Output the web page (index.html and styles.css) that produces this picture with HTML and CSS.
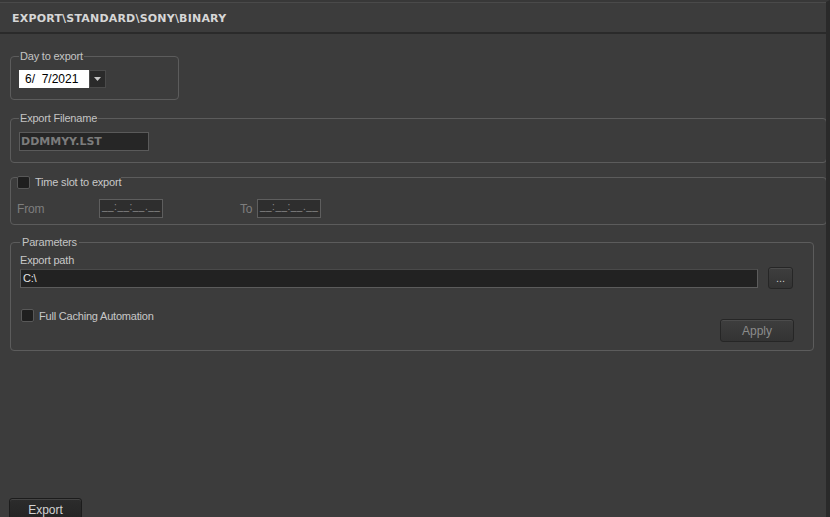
FILE: index.html
```html
<!DOCTYPE html>
<html>
<head>
<meta charset="utf-8">
<link rel="stylesheet" href="styles.css">
</head>
<body>
<div class="window">
  <div class="header"><span class="title">EXPORT\STANDARD\SONY\BINARY</span></div>
  <div class="body">
    <fieldset class="group g-day">
      <legend class="legend">Day to export</legend>
      <div class="combo">
        <span class="combo-value">6/&nbsp; 7/2021</span>
        <span class="combo-btn"><svg width="7" height="4" viewBox="0 0 7 4"><path d="M0 0H7L3.5 4Z" fill="#c8c8c8"/></svg></span>
      </div>
    </fieldset>

    <fieldset class="group g-file">
      <legend class="legend">Export Filename</legend>
      <div class="filename">DDMMYY.LST</div>
    </fieldset>

    <fieldset class="group g-time">
      <legend class="legend check-legend"><span class="checkbox"></span><span class="check-text">Time slot to export</span></legend>
      <div class="time-row">
        <span class="dim-label from">From</span>
        <span class="time-box">__:__:__.__</span>
        <span class="dim-label to">To</span>
        <span class="time-box">__:__:__.__</span>
      </div>
    </fieldset>

    <fieldset class="group g-params">
      <legend class="legend legend-params">Parameters</legend>
      <div class="field-label">Export path</div>
      <div class="path-row">
        <div class="path-input">C:\</div>
        <button class="btn browse">...</button>
      </div>
      <div class="option-row">
        <label class="check-option"><span class="checkbox"></span><span class="check-text">Full Caching Automation</span></label>
        <button class="btn apply">Apply</button>
      </div>
    </fieldset>
  </div>
  <div class="footer">
    <button class="btn export">Export</button>
  </div>
</div>
</body>
</html>
```

FILE: styles.css
```css
* { box-sizing: border-box; }

html, body {
  margin: 0;
  padding: 0;
  background: #3c3c3c;
}

body {
  font-family: "Liberation Sans", Arial, sans-serif;
  font-size: 11px;
  letter-spacing: -0.2px;
  color: #c4c4c4;
}

.window {
  width: 830px;
  height: 517px;
  overflow: hidden;
  display: flex;
  flex-direction: column;
  background: #3c3c3c;
  border-top: 2px solid #383838;
  border-right: 4px solid #2a2a2a;
  box-shadow: inset 0 1px 0 #4a4a4a;
}

.header {
  height: 32px;
  flex: none;
  display: flex;
  align-items: center;
  padding-left: 12px;
  padding-top: 2px;
  border-bottom: 2px solid #2a2a2a;
}

.title {
  font-family: "DejaVu Sans", sans-serif;
  font-weight: bold;
  font-size: 11px;
  color: #d6d6d6;
  letter-spacing: 0.2px;
}

.body {
  flex: 1;
  padding: 15px 0 0 10px;
  display: flex;
  flex-direction: column;
  align-items: flex-start;
}

.group {
  margin: 0;
  border: 1px solid #5c5c5c;
  border-radius: 4px;
  min-inline-size: 0;
}

.legend {
  padding: 0 1px;
  line-height: 14px;
  color: #c4c4c4;
}

/* Day to export */
.g-day {
  width: 169px;
  padding: 7px 8px 11px 8px;
}

.combo {
  display: flex;
  width: 87px;
  height: 18px;
}

.combo-value {
  width: 70px;
  background: #ffffff;
  color: #000;
  line-height: 18px;
  padding-left: 6px;
  font-size: 12px;
  letter-spacing: 0;
}

.combo-btn {
  width: 17px;
  background: #2a2a2a;
  border: 1px solid #4a4a4a;
  display: flex;
  align-items: center;
  justify-content: center;
}

/* Export filename */
.g-file {
  width: 817px;
  margin-top: 11px;
  padding: 7px 8px 11px 8px;
}

.filename {
  width: 130px;
  height: 19px;
  background: #262626;
  border: 1px solid #5a5a5a;
  font-family: "DejaVu Sans", sans-serif;
  font-weight: bold;
  font-size: 11px;
  letter-spacing: 0;
  line-height: 17px;
  color: #7c7c7c;
  padding-left: 1px;
}

/* Time slot */
.g-time {
  width: 817px;
  margin-top: 3px;
  padding: 10px 6px 6px 6px;
}

.check-legend {
  padding: 10px 0 0 0;
  display: flex;
  align-items: center;
  height: 23px;
  line-height: 13px;
}

.checkbox {
  display: inline-block;
  width: 13px;
  height: 13px;
  background: #1f1f1f;
  border: 1px solid #585858;
  border-radius: 2px;
  flex: none;
}

.check-text {
  margin-left: 5px;
  font-size: 11px;
  color: #c8c8c8;
}

.time-row {
  display: flex;
  align-items: center;
  height: 19px;
}

.dim-label {
  color: #7e7e7e;
  font-size: 12px;
}

.from { width: 82px; }
.to { width: 17px; margin-left: 77px; }

.time-box {
  width: 64px;
  height: 19px;
  background: #2e2e2e;
  border: 1px solid #5e5e5e;
  color: #8a8a8a;
  font-size: 10px;
  letter-spacing: 0.5px;
  line-height: 14px;
  padding-left: 2px;
  overflow: hidden;
  white-space: nowrap;
}

/* Parameters */
.g-params {
  width: 804px;
  margin-top: 10px;
  padding: 4px 19px 8px 9px;
}

.legend-params {
  padding: 0 2px;
}

.field-label {
  line-height: 14px;
  color: #c8c8c8;
}

.path-row {
  display: flex;
  align-items: center;
  gap: 10px;
  margin-top: 0;
}

.path-input {
  width: 738px;
  height: 19px;
  background: #222222;
  border: 1px solid #5c5c5c;
  border-top-color: #4a4a4a;
  color: #e4e4e4;
  line-height: 17px;
  padding-left: 2px;
}

.btn {
  font-family: "Liberation Sans", Arial, sans-serif;
  font-size: 11px;
  border: 1px solid #262626;
  border-radius: 3px;
  background: linear-gradient(#3e3e3e, #333333);
  box-shadow: inset 0 1px 0 #4c4c4c;
  color: #cfcfcf;
  padding: 0;
}

.browse {
  width: 25px;
  height: 22px;
  line-height: 18px;
  color: #c8c8c8;
}

.option-row {
  display: flex;
  justify-content: space-between;
  align-items: flex-start;
  margin-top: 20px;
}

.check-option {
  display: flex;
  align-items: center;
  margin-left: 1px;
}

.apply {
  width: 74px;
  height: 23px;
  margin-top: 10px;
  margin-right: 0;
  color: #8c8c8c;
  font-size: 12px;
}

/* Footer */
.footer {
  flex: none;
  padding-left: 9px;
  height: 19px;
}

.export {
  width: 73px;
  height: 24px;
  font-size: 12px;
  color: #d2d2d2;
  background: linear-gradient(#2c2c2c, #232323);
  border-color: #1c1c1c;
  box-shadow: inset 0 1px 0 #444;
  padding-top: 0;
  padding-bottom: 1px;
}
```
